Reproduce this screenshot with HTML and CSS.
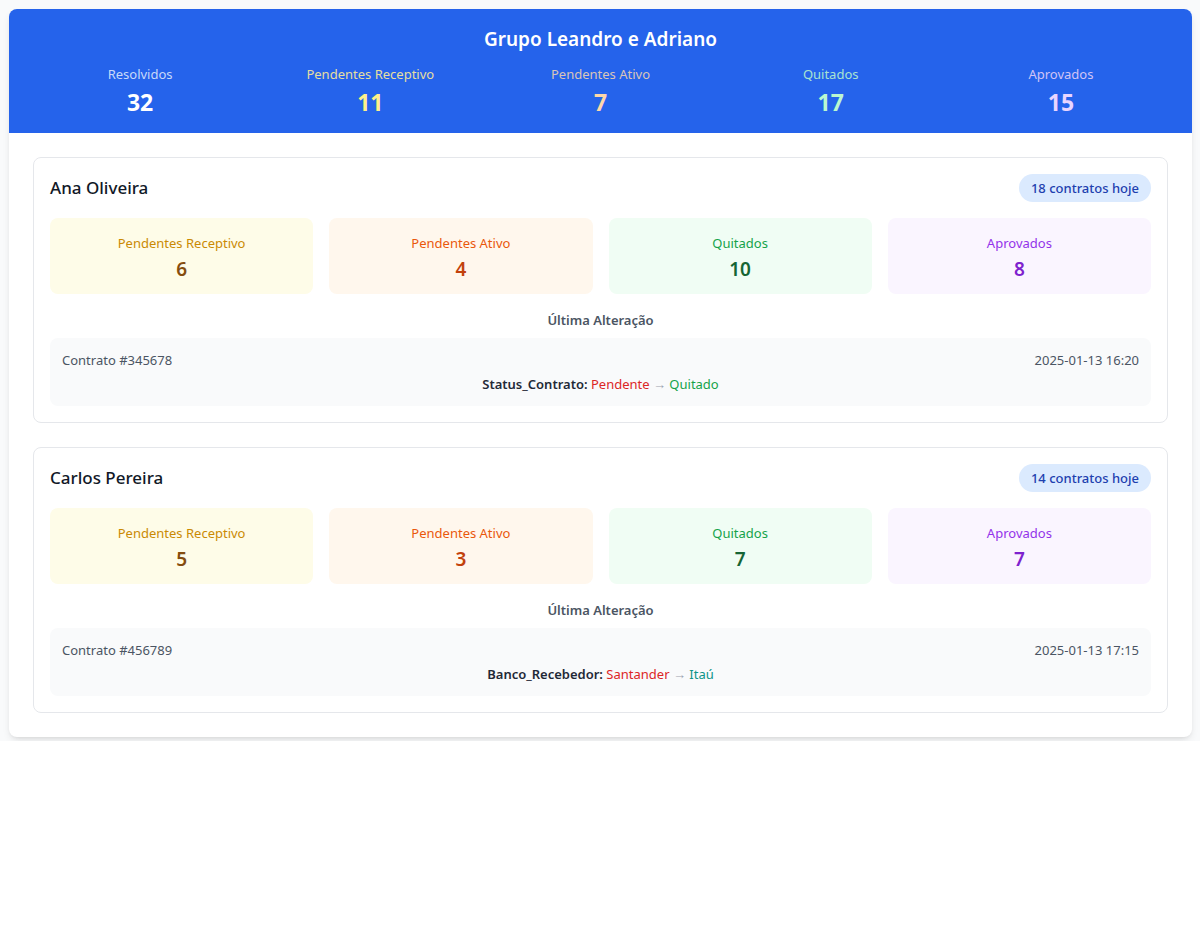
FILE: index.html
```html
<!DOCTYPE html>
<html lang="pt-BR">
<head>
<meta charset="utf-8">
<title>Grupo Leandro e Adriano</title>
<link rel="stylesheet" href="styles.css">
</head>
<body>
<div class="page">
  <div class="panel">
    <header class="group-header">
      <h1 class="group-title">Grupo Leandro e Adriano</h1>
      <div class="group-stats">
        <div class="gstat"><div class="gstat-label l-blue">Resolvidos</div><div class="gstat-value v-white">32</div></div>
        <div class="gstat"><div class="gstat-label l-yellow">Pendentes Receptivo</div><div class="gstat-value v-yellow">11</div></div>
        <div class="gstat"><div class="gstat-label l-orange">Pendentes Ativo</div><div class="gstat-value v-orange">7</div></div>
        <div class="gstat"><div class="gstat-label l-green">Quitados</div><div class="gstat-value v-green">17</div></div>
        <div class="gstat"><div class="gstat-label l-purple">Aprovados</div><div class="gstat-value v-purple">15</div></div>
      </div>
    </header>

    <main class="agents">
      <section class="agent">
        <div class="agent-head">
          <h2 class="agent-name">Ana Oliveira</h2>
          <span class="badge">18 contratos hoje</span>
        </div>
        <div class="agent-stats">
          <div class="astat yellow"><div class="astat-label">Pendentes Receptivo</div><div class="astat-value">6</div></div>
          <div class="astat orange"><div class="astat-label">Pendentes Ativo</div><div class="astat-value">4</div></div>
          <div class="astat green"><div class="astat-label">Quitados</div><div class="astat-value">10</div></div>
          <div class="astat purple"><div class="astat-label">Aprovados</div><div class="astat-value">8</div></div>
        </div>
        <div class="last-title">Última Alteração</div>
        <div class="change">
          <div class="change-row">
            <span>Contrato #345678</span>
            <span>2025-01-13 16:20</span>
          </div>
          <div class="change-detail">
            <strong class="field">Status_Contrato:</strong> <span class="old">Pendente</span> <span class="arrow">→</span> <span class="new">Quitado</span>
          </div>
        </div>
      </section>

      <section class="agent">
        <div class="agent-head">
          <h2 class="agent-name">Carlos Pereira</h2>
          <span class="badge">14 contratos hoje</span>
        </div>
        <div class="agent-stats">
          <div class="astat yellow"><div class="astat-label">Pendentes Receptivo</div><div class="astat-value">5</div></div>
          <div class="astat orange"><div class="astat-label">Pendentes Ativo</div><div class="astat-value">3</div></div>
          <div class="astat green"><div class="astat-label">Quitados</div><div class="astat-value">7</div></div>
          <div class="astat purple"><div class="astat-label">Aprovados</div><div class="astat-value">7</div></div>
        </div>
        <div class="last-title">Última Alteração</div>
        <div class="change">
          <div class="change-row">
            <span>Contrato #456789</span>
            <span>2025-01-13 17:15</span>
          </div>
          <div class="change-detail">
            <strong class="field">Banco_Recebedor:</strong> <span class="old">Santander</span> <span class="arrow">→</span> <span class="new teal">Itaú</span>
          </div>
        </div>
      </section>
    </main>
  </div>
</div>
</body>
</html>
```

FILE: styles.css
```css
* { box-sizing: border-box; }
html { background: #ffffff; }
body {
  margin: 0;
  font-family: "Noto Sans", "Open Sans", Arial, sans-serif;
  color: #111827;
}
.page {
  background: #f9fafb;
  padding: 9px 8px 4px 9px;
}
.panel {
  background: #ffffff;
  border-radius: 8px;
  overflow: hidden;
  box-shadow: 0 4px 8px -2px rgba(0,0,0,0.12), 0 2px 4px -2px rgba(0,0,0,0.08);
}
.group-header {
  background: #2563eb;
  padding: 16px 16px 14px;
  text-align: center;
}
.group-title {
  margin: 0 0 11px;
  font-size: 19px;
  line-height: 28px;
  font-weight: 600;
  color: #ffffff;
}
.group-stats {
  display: grid;
  grid-template-columns: repeat(5, 1fr);
}
.gstat-label {
  font-size: 13px;
  line-height: 20px;
}
.gstat-value {
  margin-top: 2px;
  font-size: 23px;
  line-height: 33px;
  font-weight: 700;
}
.l-blue { color: #c7d9f9; }
.l-yellow { color: #e6dfa0; }
.l-orange { color: #d9c5b8; }
.l-green { color: #a9e3d1; }
.l-purple { color: #d1c4f6; }
.v-white { color: #ffffff; }
.v-yellow { color: #fef08a; }
.v-orange { color: #fed7aa; }
.v-green { color: #bbf7d0; }
.v-purple { color: #e9d5ff; }

.agents {
  padding: 24px;
  display: flex;
  flex-direction: column;
  gap: 24px;
}
.agent {
  border: 1px solid #e5e7eb;
  border-radius: 8px;
  padding: 16px;
}
.agent-head {
  display: flex;
  justify-content: space-between;
  align-items: center;
  margin-bottom: 16px;
}
.agent-name {
  margin: 0;
  font-size: 17px;
  line-height: 28px;
  font-weight: 500;
  color: #111827;
}
.badge {
  background: #dbeafe;
  color: #1e40af;
  font-size: 13px;
  line-height: 20px;
  font-weight: 500;
  padding: 4px 12px;
  border-radius: 9999px;
}
.agent-stats {
  display: grid;
  grid-template-columns: repeat(4, 1fr);
  gap: 16px;
}
.astat {
  border-radius: 8px;
  padding: 15px 16px 11px;
  text-align: center;
}
.astat-label {
  font-size: 13px;
  line-height: 20px;
}
.astat-value {
  margin-top: 2px;
  font-size: 19px;
  line-height: 28px;
  font-weight: 600;
}
.yellow { background: #fefce8; }
.yellow .astat-label { color: #ca8a04; }
.yellow .astat-value { color: #854d0e; }
.orange { background: #fff7ed; }
.orange .astat-label { color: #ea580c; }
.orange .astat-value { color: #c2410c; }
.green { background: #f0fdf4; }
.green .astat-label { color: #16a34a; }
.green .astat-value { color: #166534; }
.purple { background: #faf5ff; }
.purple .astat-label { color: #9333ea; }
.purple .astat-value { color: #7e22ce; }

.last-title {
  margin: 16px 0 8px;
  text-align: center;
  font-size: 13px;
  line-height: 20px;
  font-weight: 600;
  color: #4b5563;
}
.change {
  background: #f9fafb;
  border-radius: 8px;
  padding: 12px;
}
.change-row {
  display: flex;
  justify-content: space-between;
  font-size: 13px;
  line-height: 20px;
  color: #4b5563;
}
.change-detail {
  margin-top: 4px;
  text-align: center;
  font-size: 13px;
  line-height: 20px;
}
.field { font-weight: 600; color: #1f2937; }
.old { color: #dc2626; }
.arrow { color: #9ca3af; }
.new { color: #16a34a; }
.new.teal { color: #0d9488; }
```
